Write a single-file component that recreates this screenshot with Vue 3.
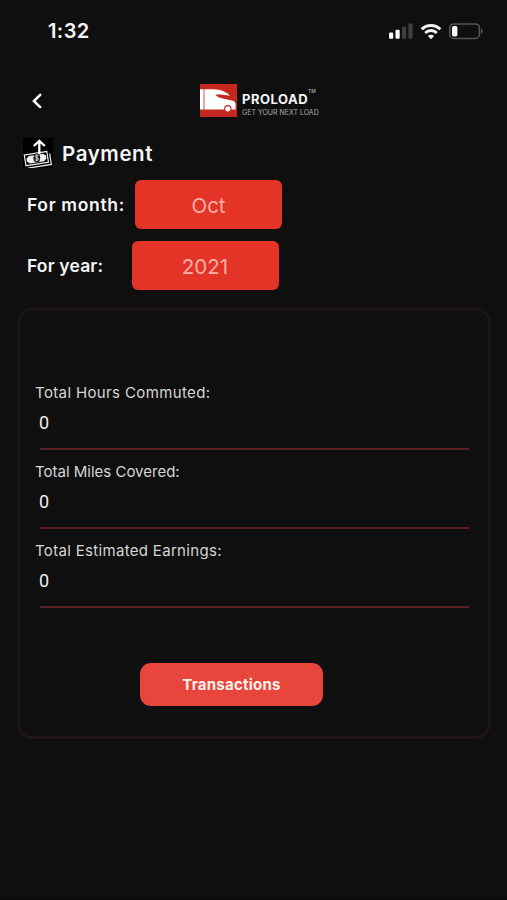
<script setup>
import { ref } from 'vue';

const month = ref('Oct');
const year = ref('2021');

// Monthly totals
const totals = [
    { key: 'hours', label: 'Total Hours Commuted:', value: 0 },
    { key: 'miles', label: 'Total Miles Covered:', value: 0 },
    { key: 'earnings', label: 'Total Estimated Earnings:', value: 0 }
];
</script>

<template>
    <div class="payment-page">
        <div class="status-bar">
            <span class="time">1:32</span>
            <svg class="status-icons" width="96" height="20" viewBox="0 0 96 20">
                <!-- signal -->
                <rect x="1" y="11.5" width="4.2" height="6.2" rx="1.2" fill="#fff" />
                <rect x="7.5" y="8.7" width="4.2" height="9" rx="1.2" fill="#fff" />
                <rect x="14" y="5.5" width="4.2" height="12.2" rx="1.2" fill="#3e3e3e" />
                <rect x="20.4" y="2.5" width="4.2" height="15.2" rx="1.2" fill="#3e3e3e" />
                <!-- wifi -->
                <g fill="none" stroke="#f5f5f5" stroke-width="3">
                    <path d="M33.7 8.3a13 13 0 0 1 18.6 0" />
                    <path d="M37.2 12a8.2 8.2 0 0 1 11.6 0" />
                </g>
                <path d="M43 18.3l-3.1-3.3a4.4 4.4 0 0 1 6.2 0z" fill="#f5f5f5" />
                <!-- battery -->
                <rect x="61.8" y="2.9" width="29.6" height="14.6" rx="4" fill="none" stroke="#565656" stroke-width="1.5" />
                <rect x="64" y="5" width="5.4" height="10.6" rx="1.8" fill="#fff" />
                <path d="M93 7.6c2.4 1 2.4 4.2 0 5.2z" fill="#565656" />
            </svg>
        </div>

        <header class="top-bar">
            <svg class="back" width="12" height="16" viewBox="0 0 12 16">
                <path d="M9.2 2.8L2.9 9l6.3 6.2" fill="none" stroke="#fff" stroke-width="2.5" stroke-linecap="round" />
            </svg>
            <div class="logo">
                <svg width="37" height="33" viewBox="0 0 37 33">
                    <rect width="37" height="33" fill="#c5281f" />
                    <path d="M0 5.3h14c6 .2 12.500 2.200 16 6.600-4.500-1.200-9.500-1.700-14.500-1.400 1.200 2.400 4 3.500 8.200 4.200l8.200 1.800c2.600.6 3.700 2 3.700 4v5H0z" fill="#fff" />
                    <path d="M4 5v21" stroke="#c5281f" stroke-width=".8" />
                    <circle cx="27.8" cy="24.8" r="3.2" fill="#fff" stroke="#c5281f" stroke-width="1.1" />
                </svg>
                <div class="logo-text">
                    <div class="brand-row">
                        <span class="brand">PROLOAD</span>
                        <span class="tm">TM</span>
                    </div>
                    <div class="tagline">GET YOUR NEXT LOAD</div>
                </div>
            </div>
        </header>

        <div class="title-row">
            <svg width="30" height="30" viewBox="0 0 30 30">
                <rect width="30" height="30" fill="#000" />
                <g transform="rotate(-9 15 22)" fill="none" stroke="#eee">
                    <path d="M4 28.5h23.5V17.5" stroke-width="1.2" />
                    <rect x="2.2" y="15" width="22.8" height="10.8" stroke-width="1.2" />
                    <path d="M6.5 16.5h14.5l2.5 2.4v3l-2.5 2.4h-14.5l-2.7-2.4v-3z" fill="#eee" stroke="none" />
                </g>
                <ellipse cx="13.8" cy="20" rx="3.4" ry="4.4" fill="#111" />
                <path d="M15.6 17.9c-1-1-3.600-.8-3.500.6.1 1.500 3.500.9 3.500 2.600 0 1.500-2.700 1.600-3.700.5M13.800 16.300v7" fill="none" stroke="#eee" stroke-width=".9" />
                <path d="M16.3 16V3M10.8 8l5.5-5.2 5.5 5.2" fill="none" stroke="#fff" stroke-width="2.3" />
            </svg>
            <h1>Payment</h1>
        </div>

        <div class="filter-row">
            <label class="month-label">For month:</label>
            <button class="picker">{{ month }}</button>
        </div>
        <div class="filter-row">
            <label class="year-label">For year:</label>
            <button class="picker">{{ year }}</button>
        </div>

        <section class="card">
            <div class="divider"></div>
            <div v-for="item in totals" :key="item.key" class="total">
                <div class="total-label" :class="item.key">{{ item.label }}</div>
                <div class="total-value">{{ item.value }}</div>
            </div>
            <button class="transactions">Transactions</button>
        </section>
    </div>
</template>

<style>
body {
    background: #0f0f0f;
}
</style>

<style scoped>
.payment-page {
    display: flex;
    flex-direction: column;
    box-sizing: border-box;
    height: 900px;
    background: #0f0f0f;
    color: #f5f5f5;
    font-family: Inter, 'Liberation Sans', sans-serif;
    border-bottom: 1px solid #09070a;
}

.status-bar {
    display: flex;
    justify-content: space-between;
    align-items: center;
    height: 61px;
    padding: 0 23px 0 48px;
}

.time {
    font-size: 20px;
    font-weight: 600;
    letter-spacing: 0.4px;
}

.top-bar {
    display: flex;
    align-items: center;
    height: 78px;
    padding-left: 31px;
}

.logo {
    display: flex;
    align-items: center;
    margin-left: 157px;
    gap: 5px;
}

.logo-text {
    padding-top: 8px;
    white-space: nowrap;
}

.brand-row {
    display: flex;
    align-items: flex-start;
    height: 14px;
}

.brand {
    font-size: 13px;
    font-weight: 700;
    line-height: 14px;
    letter-spacing: 0.5px;
}

.tm {
    margin-top: -4px;
    color: #ccc;
    font-size: 5px;
    line-height: 6px;
}

.tagline {
    margin-top: 2px;
    color: #aaa;
    font-size: 7px;
    line-height: 9px;
}

.title-row {
    display: flex;
    align-items: center;
    height: 28px;
    padding-left: 23px;
    gap: 9px;
}

h1 {
    margin: 0;
    font-size: 20.5px;
    font-weight: 600;
    letter-spacing: 0.6px;
}

.filter-row {
    display: flex;
    align-items: center;
    height: 49px;
    margin-top: 12px;
    padding-left: 27px;
}

.title-row + .filter-row {
    margin-top: 13px;
}

.filter-row label {
    width: 108px;
    font-size: 17.5px;
    font-weight: 600;
    letter-spacing: 0.65px;
    white-space: nowrap;
}

.filter-row .year-label {
    width: 104.5px;
    letter-spacing: 0.15px;
}

.picker {
    width: 147px;
    height: 49px;
    padding: 2px 0 0;
    border: 0;
    border-radius: 6px;
    background: #e43428;
    color: #fab0a5;
    font-family: inherit;
    font-size: 20.5px;
    font-weight: 400;
}

.card {
    display: flex;
    flex-direction: column;
    box-sizing: border-box;
    width: 472px;
    height: 431px;
    margin: 18px 0 0 18px;
    padding: 38px 19px 0 16px;
    border: 2px solid #211416;
    border-bottom-width: 3px;
    border-radius: 14px;
}

.divider {
    height: 2px;
    margin: 0 -8px 34px -4px;
    background: #121212;
}

.total {
    display: flex;
    flex-direction: column;
    height: 79px;
}

.total-label {
    color: #d6d6d6;
    font-size: 15px;
    line-height: 18px;
    margin-left: -1px;
}

.total-label.hours {
    letter-spacing: 0.37px;
}

.total-label.miles {
    letter-spacing: 0;
}

.total-label.earnings {
    letter-spacing: 0.32px;
}

.total-value {
    box-sizing: border-box;
    height: 48px;
    margin-left: 4px;
    padding-top: 9px;
    border-bottom: 2px solid #5c2024;
    color: #eee;
    font-family: Roboto, sans-serif;
    font-size: 18px;
    line-height: 24px;
    text-indent: -1px;
}

.transactions {
    width: 183px;
    height: 43px;
    margin: 42px 0 0 104px;
    padding: 0;
    border: 0;
    border-radius: 11px;
    background: #e8453c;
    color: #fff0ec;
    font-family: inherit;
    font-size: 15px;
    font-weight: 700;
    letter-spacing: 0.25px;
}
</style>
